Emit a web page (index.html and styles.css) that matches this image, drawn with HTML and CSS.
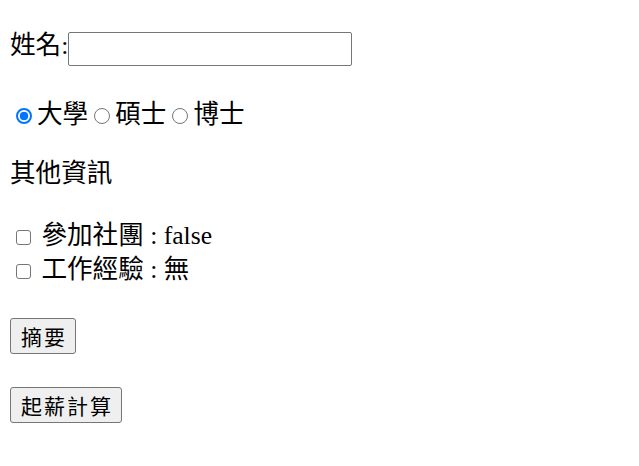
FILE: index.html
```html
<!DOCTYPE html>
<html>
<head>
<meta charset="utf-8">
<link rel="stylesheet" href="styles.css">
</head>
<body>
<p class="row row-name"><span class="label">姓名:</span><input type="text" class="name-input"></p>
<p class="row row-degree"><input type="radio" name="deg" class="radio" checked>大學<input type="radio" name="deg" class="radio">碩士<input type="radio" name="deg" class="radio">博士</p>
<p class="row row-title">其他資訊</p>
<p class="row row-checks"><input type="checkbox" class="check"> 參加社團 : false<br><input type="checkbox" class="check"> 工作經驗 : 無</p>
<p class="row row-btn1"><button class="btn">摘要</button></p>
<p class="row row-btn2"><button class="btn">起薪計算</button></p>
</body>
</html>
```
FILE: styles.css
```css
html, body {
  margin: 0;
  padding: 0;
}
body {
  padding: 0 10px;
  font-family: "Liberation Serif", "Noto Sans CJK TC", serif;
  font-size: 25.6px;
  line-height: 34px;
  color: #000;
  background: #fff;
}
.row {
  margin: 0;
}
.row-name {
  display: flex;
  align-items: center;
  height: 34px;
  padding-top: 32px;
}
.label {
  padding-bottom: 6px;
}
.name-input {
  box-sizing: border-box;
  width: 284px;
  height: 34px;
  border: 1px solid #767676;
  border-radius: 2px;
  padding: 1px 3px;
  font-size: 20px;
  margin: 0;
  background: #fff;
}
.row-degree {
  margin-top: 32px;
}
.row-title {
  margin-top: 25px;
}
.row-checks {
  margin-top: 28px;
}
.radio {
  appearance: none;
  -webkit-appearance: none;
  box-sizing: border-box;
  width: 16px;
  height: 16px;
  border: 1px solid #767676;
  border-radius: 50%;
  background: #fff;
  margin: 0 5px 0 6px;
  vertical-align: -1px;
}
.radio:checked {
  border: 2px solid #0075ff;
  background: radial-gradient(circle, #0075ff 0 4px, #fff 4.6px);
}
.check {
  appearance: none;
  -webkit-appearance: none;
  box-sizing: border-box;
  width: 15px;
  height: 15px;
  border: 1px solid #767676;
  border-radius: 3px;
  background: #fff;
  margin: 0 4px 0 6px;
  vertical-align: -1px;
}
.row-btn1, .row-btn2 {
  display: flex;
}
.row-btn1 {
  margin-top: 31px;
}
.row-btn2 {
  margin-top: 33px;
}
.btn {
  box-sizing: border-box;
  font-family: "Noto Sans CJK TC", sans-serif;
  font-size: 21px;
  letter-spacing: 2px;
  line-height: 1;
  height: 36px;
  padding: 0 8px 0 10px;
  background: #efefef;
  border: 1px solid #767676;
  border-radius: 3px;
  color: #000;
  margin: 0;
}
```
